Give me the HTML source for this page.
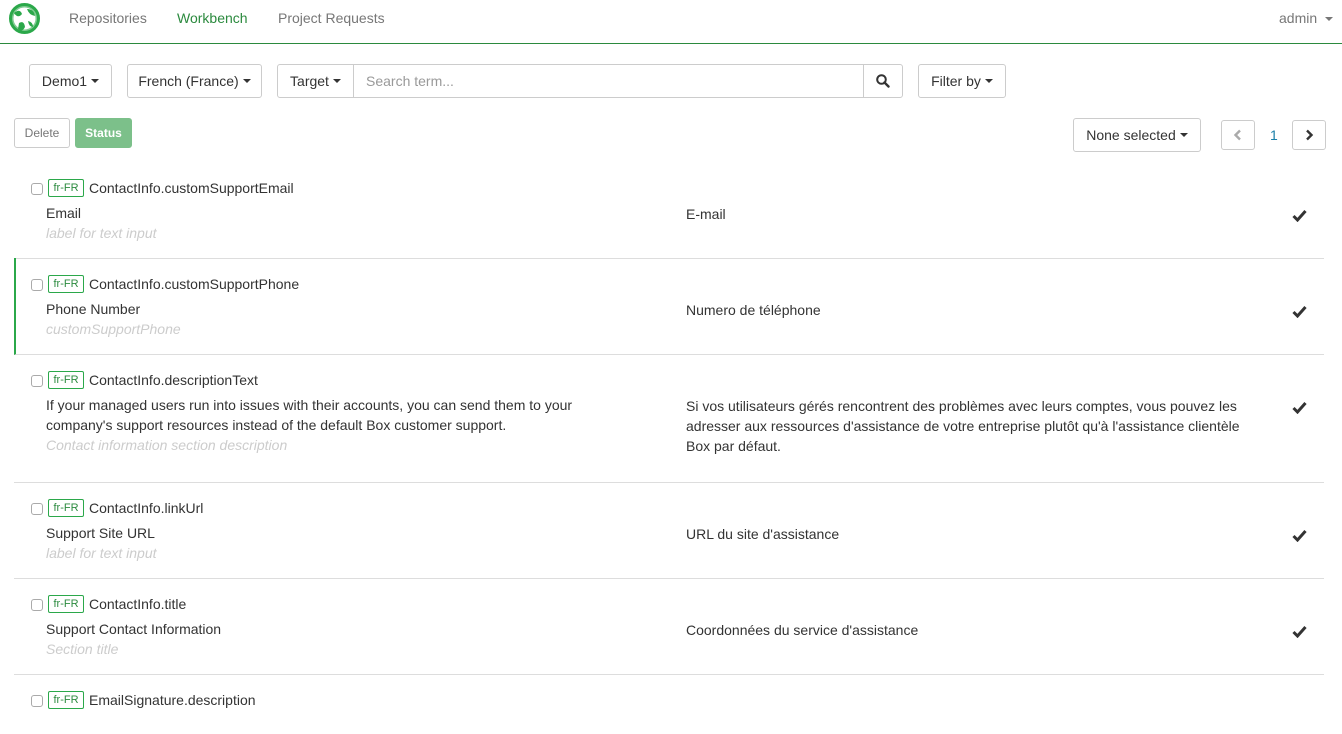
<!DOCTYPE html>
<html><head><meta charset="utf-8"><style>
*{box-sizing:border-box}
body{margin:0;width:1342px;height:715px;overflow:hidden;background:#fff;font-family:"Liberation Sans",Arial,sans-serif;font-size:14px;color:#333}
.nav{position:absolute;left:0;top:0;width:1342px;height:44px;border-bottom:1px solid #2b8a3e}
.nav a{position:absolute;top:10px;font-size:14px;color:#777}
.btn{position:absolute;border:1px solid #ccc;border-radius:3px;background:#fff;font-size:14px;color:#333;display:flex;align-items:center;justify-content:center}
.caret{display:inline-block;width:0;height:0;border-left:4px solid transparent;border-right:4px solid transparent;border-top:4px solid #333;margin-left:4px;vertical-align:middle}
.row{position:absolute;left:14px;width:1310px;border-bottom:1px solid #ddd}
.row .cb{position:absolute;left:17px;width:12px;height:12px;border:1px solid #aaa;border-radius:3px;background:#fff}
.row .badge{position:absolute;left:34px;width:36px;height:18px;border:1px solid #2ba84a;border-radius:2px;font-size:11px;color:#2b8a3e;text-align:center;line-height:16px}
.row .key{position:absolute;left:75px}
.row .lab{position:absolute;left:32px;line-height:20px;width:560px}
.row .com{position:absolute;left:32px;color:#ccc;font-style:italic}
.row .tr{position:absolute;left:672px;line-height:20px;width:580px}
.row .chk{position:absolute;left:1278px;width:15px;height:13px}
</style></head><body>
<div class="nav">
<svg style="position:absolute;left:9px;top:3px" width="31" height="31" viewBox="0 0 31 31"><circle cx="15.5" cy="15.5" r="14" fill="#fff" stroke="#2ba84a" stroke-width="3"/><path d="M5 10 Q11 5 13 11 Q9 16 5 10Z M18 6 Q25 6 26 13 Q20 12 18 6Z M10 20 Q15 17 16 24 Q13 30 9 26Z M19 18 Q24 19 24 24 Q20 24 19 18Z" fill="#2ba84a"/><circle cx="15.5" cy="15.5" r="12" fill="none" stroke="#2ba84a" stroke-width="2" opacity=".6"/></svg>
<a style="left:69px">Repositories</a>
<a style="left:177px;color:#2b8a3e">Workbench</a>
<a style="left:278px">Project Requests</a>
<a style="left:1279px">admin <span class="caret" style="border-top-color:#777"></span></a>
</div>
<div class="btn" style="left:29px;top:64px;width:83px;height:34px">Demo1<span class="caret"></span></div>
<div class="btn" style="left:127px;top:64px;width:135px;height:34px">French (France)<span class="caret"></span></div>
<div class="btn" style="left:277px;top:64px;width:77px;height:34px;border-radius:3px 0 0 3px">Target<span class="caret"></span></div>
<div class="btn" style="left:353px;top:64px;width:511px;height:34px;border-radius:0;justify-content:flex-start;padding-left:12px;color:#999">Search term...</div>
<div class="btn" style="left:863px;top:64px;width:40px;height:34px;border-radius:0 3px 3px 0"><svg width="14" height="14" viewBox="0 0 14 14"><circle cx="5.5" cy="5.5" r="4.3" fill="none" stroke="#333" stroke-width="2"/><path d="M8.5 8.5L12.5 12.5" stroke="#333" stroke-width="2.4" stroke-linecap="round"/></svg></div>
<div class="btn" style="left:918px;top:64px;width:88px;height:34px">Filter by<span class="caret"></span></div>
<div class="btn" style="left:14px;top:118px;width:56px;height:30px;font-size:12px;color:#777">Delete</div>
<div class="btn" style="left:75px;top:118px;width:57px;height:30px;font-size:12px;color:#fff;font-weight:bold;background:#7cc08a;border-color:#7cc08a">Status</div>
<div class="btn" style="left:1073px;top:118px;width:128px;height:34px">None selected<span class="caret"></span></div>
<div class="btn" style="left:1221px;top:120px;width:34px;height:30px"><svg width="10" height="12" viewBox="0 0 10 12"><path d="M7 1.5L2.5 6L7 10.5" fill="none" stroke="#aaa" stroke-width="2.4"/></svg></div>
<div style="position:absolute;left:1270px;top:127px;color:#1a7fa8">1</div>
<div class="btn" style="left:1292px;top:120px;width:34px;height:30px"><svg width="10" height="12" viewBox="0 0 10 12"><path d="M3 1.5L7.5 6L3 10.5" fill="none" stroke="#333" stroke-width="2.4"/></svg></div>

<div class="row" style="top:162px;height:97px">
<div class="cb" style="top:21px"></div><div class="badge" style="top:17px">fr-FR</div><div class="key" style="top:18px">ContactInfo.customSupportEmail</div>
<div class="lab" style="top:41px">Email</div><div class="com" style="top:63px">label for text input</div>
<div class="tr" style="top:42px">E-mail</div><svg class="chk" style="top:47px" viewBox="0 0 15 13"><path d="M1.5 7L5.5 11L13.5 2" fill="none" stroke="#333" stroke-width="3"/></svg></div>

<div class="row" style="top:258px;height:97px;border-left:2px solid #2ba84a">
<div class="cb" style="top:21px;left:15px"></div><div class="badge" style="top:17px;left:32px">fr-FR</div><div class="key" style="top:18px;left:73px">ContactInfo.customSupportPhone</div>
<div class="lab" style="top:41px;left:30px">Phone Number</div><div class="com" style="top:63px;left:30px">customSupportPhone</div>
<div class="tr" style="top:42px;left:670px">Numero de téléphone</div><svg class="chk" style="top:47px;left:1276px" viewBox="0 0 15 13"><path d="M1.5 7L5.5 11L13.5 2" fill="none" stroke="#333" stroke-width="3"/></svg></div>

<div class="row" style="top:354px;height:129px">
<div class="cb" style="top:21px"></div><div class="badge" style="top:17px">fr-FR</div><div class="key" style="top:18px">ContactInfo.descriptionText</div>
<div class="lab" style="top:41px">If your managed users run into issues with their accounts, you can send them to your company's support resources instead of the default Box customer support.</div><div class="com" style="top:83px">Contact information section description</div>
<div class="tr" style="top:42px">Si vos utilisateurs gérés rencontrent des problèmes avec leurs comptes, vous pouvez les adresser aux ressources d'assistance de votre entreprise plutôt qu'à l'assistance clientèle Box par défaut.</div><svg class="chk" style="top:47px" viewBox="0 0 15 13"><path d="M1.5 7L5.5 11L13.5 2" fill="none" stroke="#333" stroke-width="3"/></svg></div>

<div class="row" style="top:482px;height:97px">
<div class="cb" style="top:21px"></div><div class="badge" style="top:17px">fr-FR</div><div class="key" style="top:18px">ContactInfo.linkUrl</div>
<div class="lab" style="top:41px">Support Site URL</div><div class="com" style="top:63px">label for text input</div>
<div class="tr" style="top:42px">URL du site d'assistance</div><svg class="chk" style="top:47px" viewBox="0 0 15 13"><path d="M1.5 7L5.5 11L13.5 2" fill="none" stroke="#333" stroke-width="3"/></svg></div>

<div class="row" style="top:578px;height:97px">
<div class="cb" style="top:21px"></div><div class="badge" style="top:17px">fr-FR</div><div class="key" style="top:18px">ContactInfo.title</div>
<div class="lab" style="top:41px">Support Contact Information</div><div class="com" style="top:63px">Section title</div>
<div class="tr" style="top:42px">Coordonnées du service d'assistance</div><svg class="chk" style="top:47px" viewBox="0 0 15 13"><path d="M1.5 7L5.5 11L13.5 2" fill="none" stroke="#333" stroke-width="3"/></svg></div>

<div class="row" style="top:674px;height:60px;border:none">
<div class="cb" style="top:21px"></div><div class="badge" style="top:17px">fr-FR</div><div class="key" style="top:18px">EmailSignature.description</div></div>
</body></html>
